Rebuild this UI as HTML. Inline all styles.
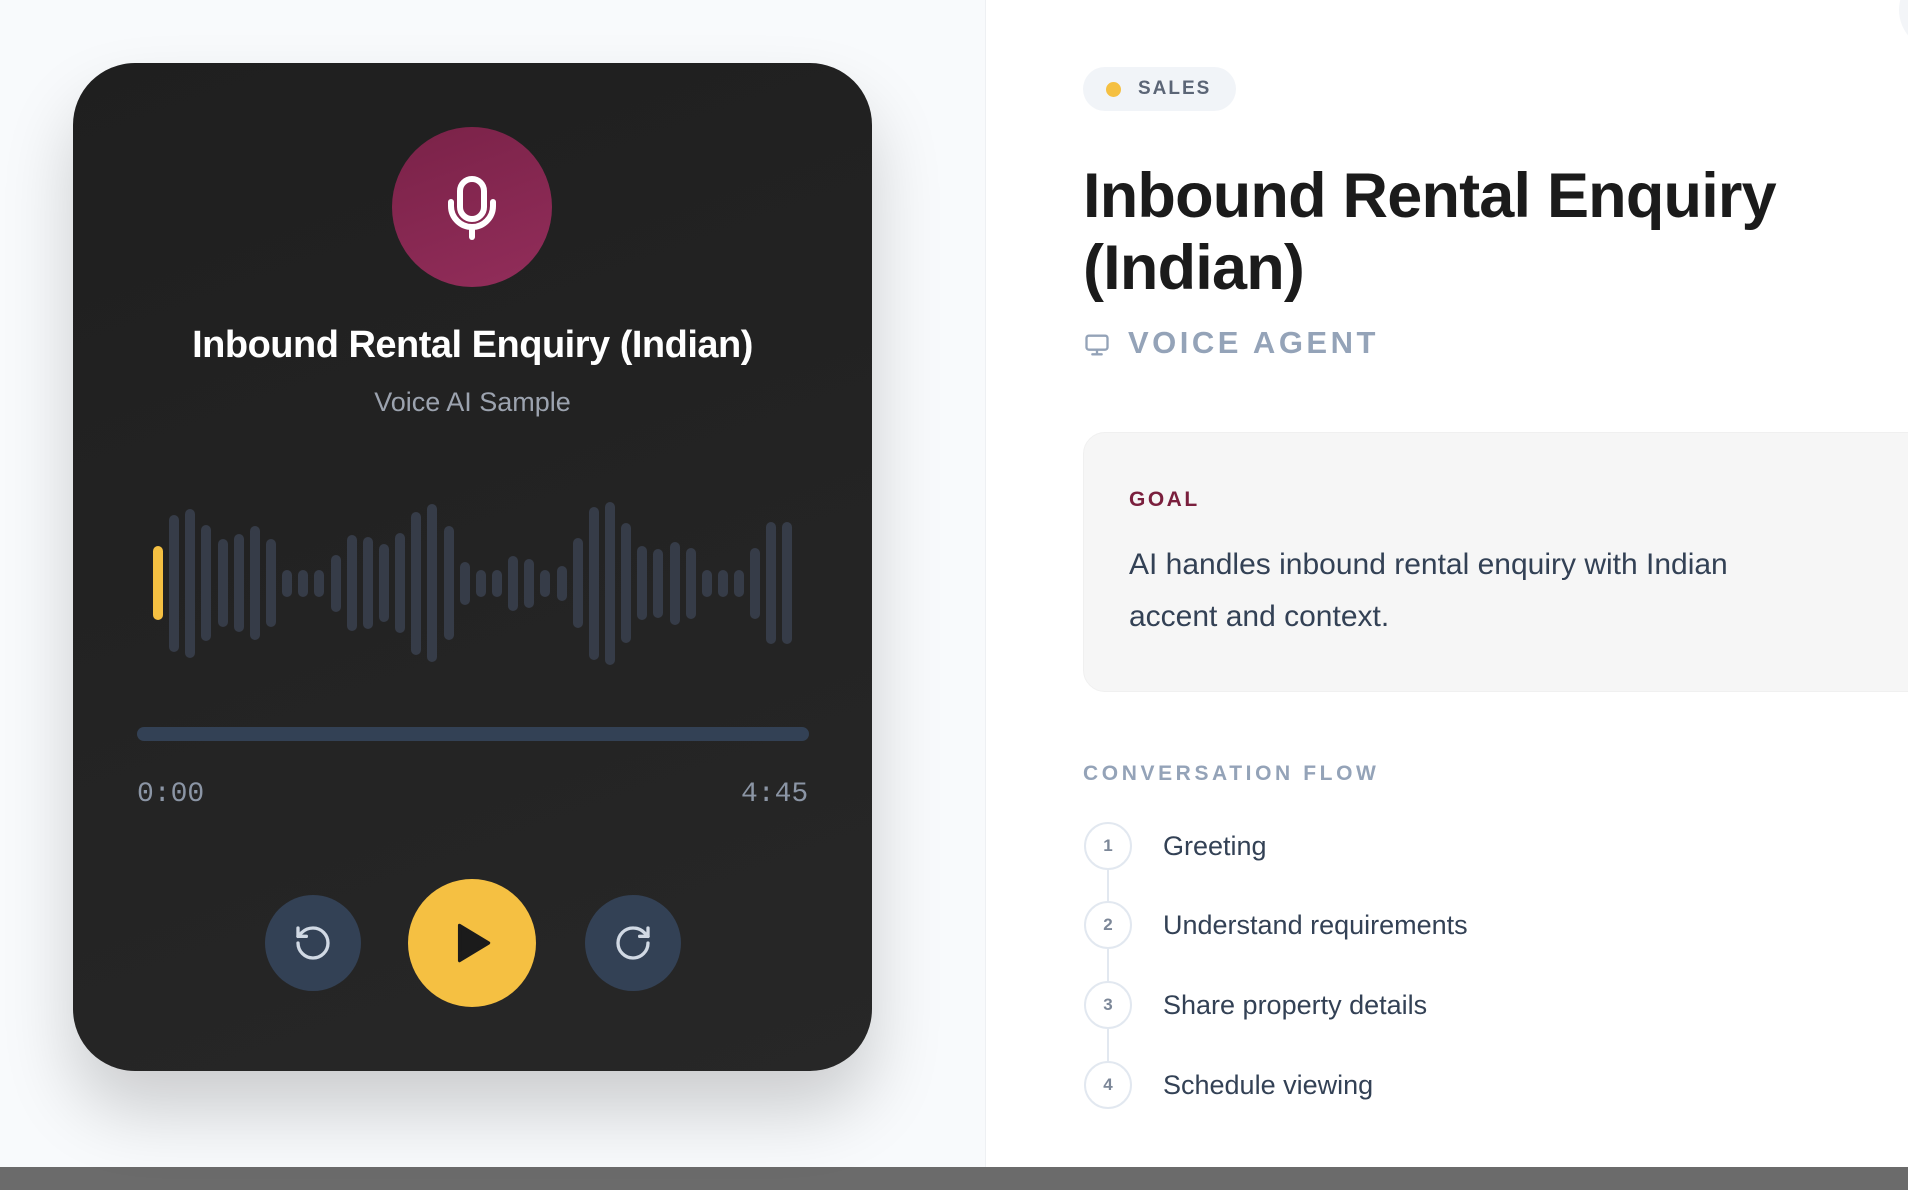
<!DOCTYPE html>
<html><head><meta charset="utf-8">
<style>
*{margin:0;padding:0;box-sizing:border-box}
html,body{width:1908px;height:1190px;overflow:hidden;font-family:"Liberation Sans",sans-serif}
body{background:#6b6b6b;position:relative}
.left{position:absolute;left:0;top:0;width:985px;height:1167px;background:#f8fafc}
.right{position:absolute;left:985px;top:0;width:923px;height:1167px;background:#fff;border-left:1px solid #eef0f3;overflow:hidden}
.card{position:absolute;left:73px;top:63px;width:799px;height:1008px;border-radius:62px;background:linear-gradient(160deg,#1f1f1f,#272727);box-shadow:0 40px 70px rgba(0,0,0,0.18)}
.mic{position:absolute;left:392px;top:127px;width:160px;height:160px;border-radius:50%;background:linear-gradient(160deg,#7a2248,#922d5a)}
.t1{position:absolute;left:73px;width:799px;top:324px;text-align:center;color:#fff;font-weight:bold;font-size:38px;letter-spacing:-0.5px}
.t2{position:absolute;left:73px;width:799px;top:387px;text-align:center;color:#9ca3af;font-size:27px}
.wave{position:absolute;left:153px;top:483px;height:200px;display:flex;align-items:center;gap:6.15px}
.wave div{width:10px;border-radius:5px;background:#363c48}
.prog{position:absolute;left:137px;top:727px;width:672px;height:14px;border-radius:7px;background:#334155}
.time{position:absolute;top:779px;font-family:"Liberation Mono",monospace;font-size:28px;color:#8b95a5}
.btn{position:absolute;border-radius:50%;display:flex;align-items:center;justify-content:center}
.badge{position:absolute;left:97px;top:67px;width:153px;height:44px;border-radius:22px;background:#f1f4f8}
.badge .dot{position:absolute;left:23px;top:15px;width:15px;height:15px;border-radius:50%;background:#f5c042}
.badge span{position:absolute;left:55px;top:11px;font-size:19px;letter-spacing:2px;color:#5b6576;font-weight:bold}
h1{position:absolute;left:97px;top:160px;font-size:63px;line-height:72px;color:#1b1b1b;font-weight:bold;letter-spacing:-0.8px}
.va{position:absolute;left:142px;top:325px;font-size:31px;letter-spacing:3.5px;color:#94a3b8;font-weight:bold}
.goal{position:absolute;left:97px;top:432px;width:900px;height:260px;border-radius:22px;background:#f6f6f6;border:1px solid #f0f0f0}
.goal .lab{position:absolute;left:45px;top:55px;font-size:21px;font-weight:bold;letter-spacing:2.5px;color:#7a1f3d}
.goal p{position:absolute;left:45px;top:106px;font-size:30px;line-height:52px;color:#334155;width:660px}
.cf{position:absolute;left:97px;top:762px;font-size:21px;font-weight:bold;letter-spacing:3.6px;color:#94a3b8}
.line{position:absolute;left:121px;top:860px;width:2px;height:220px;background:#e2e8f0}
.step{position:absolute;left:98px;width:48px;height:48px;border-radius:50%;border:2px solid #e2e8f0;background:#fff;color:#7c8798;font-size:17px;display:flex;align-items:center;justify-content:center;font-weight:bold}
.st{position:absolute;left:177px;font-size:27px;color:#334155}
.corner{position:absolute;left:913px;top:-30px;width:80px;height:80px;border-radius:50%;background:#f3f5f8}
</style></head><body>
<div class="left"></div>
<div class="card"></div>
<div class="mic"><svg width="160" height="160" viewBox="0 0 160 160"><g fill="none" stroke="#fff" stroke-width="6" stroke-linecap="round"><rect x="68" y="52" width="24" height="40" rx="12"/><path d="M59 75 v4 a21 21 0 0 0 42 0 v-4"/><path d="M80 100 v10"/></g></svg></div>
<div class="t1">Inbound Rental Enquiry (Indian)</div>
<div class="t2">Voice AI Sample</div>
<div class="wave">
<div style="height:74px;background:#f5c042"></div><div style="height:137px"></div><div style="height:149px"></div><div style="height:116px"></div><div style="height:88px"></div><div style="height:98px"></div><div style="height:114px"></div><div style="height:88px"></div><div style="height:27px"></div><div style="height:27px"></div><div style="height:27px"></div><div style="height:57px"></div><div style="height:96px"></div><div style="height:92px"></div><div style="height:78px"></div><div style="height:100px"></div><div style="height:143px"></div><div style="height:158px"></div><div style="height:114px"></div><div style="height:43px"></div><div style="height:27px"></div><div style="height:27px"></div><div style="height:55px"></div><div style="height:49px"></div><div style="height:27px"></div><div style="height:35px"></div><div style="height:90px"></div><div style="height:153px"></div><div style="height:163px"></div><div style="height:120px"></div><div style="height:74px"></div><div style="height:69px"></div><div style="height:83px"></div><div style="height:71px"></div><div style="height:27px"></div><div style="height:27px"></div><div style="height:27px"></div><div style="height:71px"></div><div style="height:122px"></div><div style="height:122px"></div>
</div>
<div class="prog"></div>
<div class="time" style="left:137px">0:00</div>
<div class="time" style="left:741px">4:45</div>
<div class="btn" style="left:265px;top:895px;width:96px;height:96px;background:#334155"><svg width="40" height="40" viewBox="0 0 24 24" fill="none" stroke="#d1d9e4" stroke-width="2" stroke-linecap="round" stroke-linejoin="round"><path d="M3 12a9 9 0 1 0 9-9 9.75 9.75 0 0 0-6.74 2.74L3 8"/><path d="M3 3v5h5"/></svg></div>
<div class="btn" style="left:408px;top:879px;width:128px;height:128px;background:#f5c042"><svg width="50" height="50" viewBox="0 0 24 24"><path d="M6 3.5 L20 12 L6 20.5 Z" fill="#1b1b1b" stroke="#1b1b1b" stroke-width="1.5" stroke-linejoin="round"/></svg></div>
<div class="btn" style="left:585px;top:895px;width:96px;height:96px;background:#334155"><svg width="40" height="40" viewBox="0 0 24 24" fill="none" stroke="#d1d9e4" stroke-width="2" stroke-linecap="round" stroke-linejoin="round"><path d="M21 12a9 9 0 1 1-9-9c2.52 0 4.93 1 6.74 2.74L21 8"/><path d="M21 3v5h-5"/></svg></div>
<div class="right">
<div class="corner"></div>
<div class="badge"><div class="dot"></div><span>SALES</span></div>
<h1>Inbound Rental Enquiry<br>(Indian)</h1>
<svg style="position:absolute;left:97px;top:331px" width="28" height="28" viewBox="0 0 24 24" fill="none" stroke="#94a3b8" stroke-width="2" stroke-linecap="round"><rect x="3" y="4" width="18" height="12" rx="2"/><path d="M12 16v4M8 20h8"/></svg>
<div class="va">VOICE AGENT</div>
<div class="goal"><div class="lab">GOAL</div><p>AI handles inbound rental enquiry with Indian accent and context.</p></div>
<div class="cf">CONVERSATION FLOW</div>
<div class="line"></div>
<div class="step" style="top:822px">1</div><div class="st" style="top:831px">Greeting</div>
<div class="step" style="top:901px">2</div><div class="st" style="top:910px">Understand requirements</div>
<div class="step" style="top:981px">3</div><div class="st" style="top:990px">Share property details</div>
<div class="step" style="top:1061px">4</div><div class="st" style="top:1070px">Schedule viewing</div>
</div>
</body></html>
